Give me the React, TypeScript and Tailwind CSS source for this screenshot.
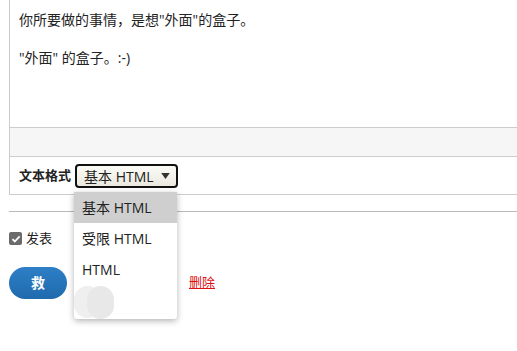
const font = { fontFamily: '"Open Sans", "Noto Sans CJK SC", sans-serif' };

const options = ["基本 HTML", "受限 HTML", "HTML"];

export default function App() {
  return (
    <div className="relative h-[351px] w-[517px] overflow-hidden bg-white text-[14px] text-[#222]" style={font}>
      <div className="pl-[9px]">
        {/* editor */}
        <div className="border-b border-l border-[#ccc]">
          <div className="h-[128px] border-b border-[#ccc] pl-[9px] pt-[9px] leading-[22px]">
            <p>你所要做的事情，是想"外面"的盒子。</p>
            <p className="mt-[16px]">"外面" 的盒子。:-)</p>
          </div>
          <div className="h-[29px] border-b border-[#ccc] bg-[#f6f6f6]" />
          <div className="flex h-[37px] items-center gap-[4px] pl-[9px] pt-[1px]">
            <span className="text-[13px] font-bold">文本格式</span>
            <div className="flex h-[24px] w-[103px] items-center justify-between rounded-[4px] border-2 border-[#111] bg-gradient-to-b from-[#fbfbf7] to-[#ebe9df] pl-[7px] pr-[6px] text-[14px]">
              <span>基本 HTML</span>
              <svg width="9" height="6" viewBox="0 0 10 7">
                <path d="M0 0h10L5 7z" fill="#333" />
              </svg>
            </div>
          </div>
        </div>

        <div className="mt-[16px] border-t border-[#bbb]" />

        <label className="mt-[17px] flex items-center gap-[4px] text-[13px]">
          <span className="flex h-[13px] w-[13px] items-center justify-center rounded-[2px] bg-[#6b6b6b]">
            <svg width="10" height="10" viewBox="0 0 10 10">
              <path d="M1.5 5.2l2.3 2.3L8.6 2.4" stroke="#fff" strokeWidth="1.8" fill="none" />
            </svg>
          </span>
          发表
        </label>

        <div className="mt-[18px] flex items-center">
          <button className="h-[32px] w-[58px] rounded-full bg-gradient-to-b from-[#2d7fc6] to-[#1f6aad] text-[14px] font-bold text-white">
            救
          </button>
          <a className="ml-[122px] text-[13px] text-[#d11] underline">删除</a>
        </div>
      </div>

      {/* open select list */}
      <div className="absolute left-[74px] top-[192px] h-[127px] w-[103px] rounded-b-[3px] bg-white shadow-[0_2px_6px_rgba(0,0,0,0.3)]">
        {options.map((o, i) => (
          <div
            key={o}
            className={`flex h-[31px] items-center pl-[8px] text-[14px] ${i === 0 ? "bg-[#cfcfcf]" : ""}`}
          >
            {o}
          </div>
        ))}
        <div className="absolute left-0 top-[94px] h-[32px] w-[27px] rounded-full bg-[#efefef]" />
        <div className="absolute left-[13px] top-[94px] h-[33px] w-[27px] rounded-full bg-[#e8e8e8]" />
      </div>
    </div>
  );
}
